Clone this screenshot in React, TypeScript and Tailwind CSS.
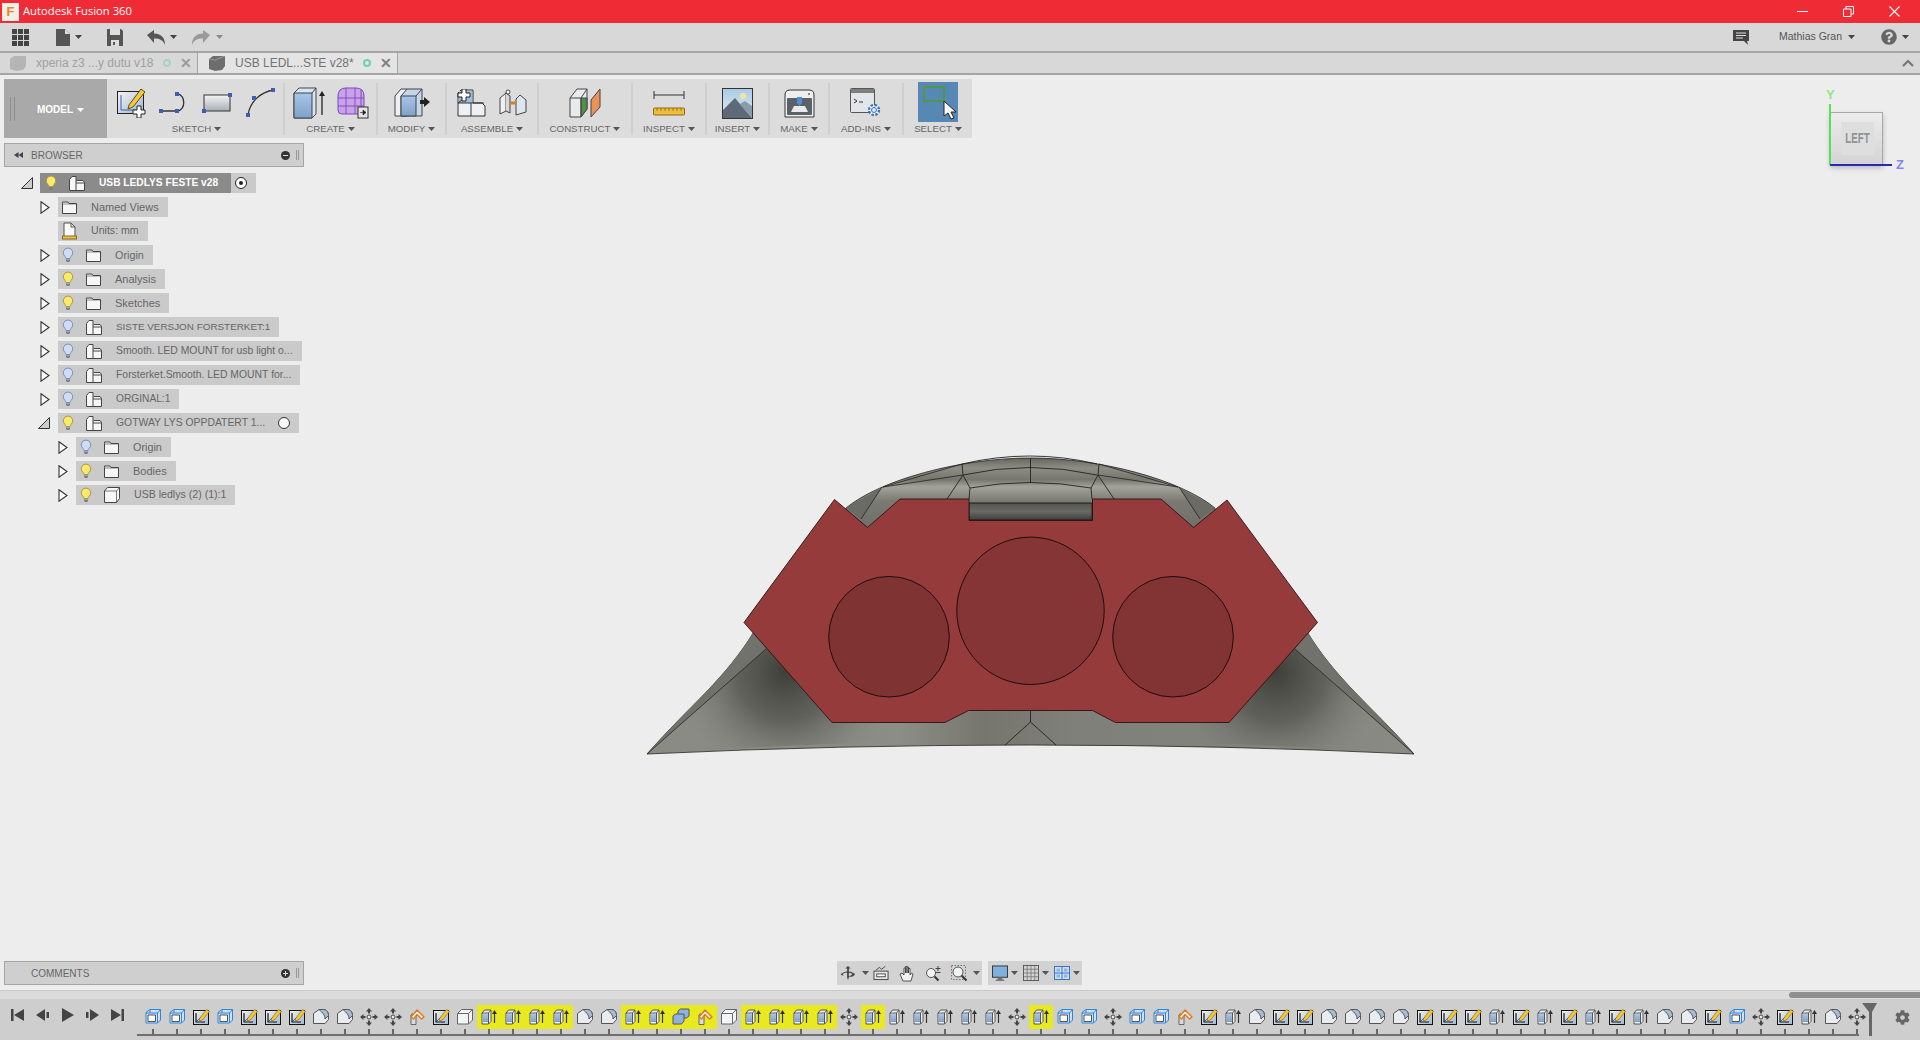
import { FaCog, FaQuestionCircle } from "react-icons/fa";

const timeline = "c c s c s s s f f m m o s b E E E E f f E E D O b E E E E m E e e e e e m E c c m c c o s e f s s f f f f s s s e s e s e s e f f s c m s e f m".split(" ");

function Caret({ color = "#444" }: { color?: string }) {
  return (
    <svg width="7" height="4" viewBox="0 0 7 4" className="shrink-0">
      <path d="M0 0h7L3.5 4z" fill={color} />
    </svg>
  );
}

function Gradients() {
  return (
    <svg className="absolute h-0 w-0">
      <defs>
        <linearGradient id="blueFace" x1="0" y1="0" x2="0" y2="1">
          <stop offset="0" stopColor="#a9c6e8" />
          <stop offset="1" stopColor="#7fa0c9" />
        </linearGradient>
        <linearGradient id="paper" x1="0" y1="0" x2="1" y2="1">
          <stop offset="0" stopColor="#ffffff" />
          <stop offset="1" stopColor="#b9c0c9" />
        </linearGradient>
        <linearGradient id="rectFill" x1="0" y1="0" x2="0" y2="1">
          <stop offset="0" stopColor="#f4f4f4" />
          <stop offset="1" stopColor="#a9aeb6" />
        </linearGradient>
        <linearGradient id="sketchFill" x1="0" y1="0" x2="1" y2="1">
          <stop offset="0" stopColor="#f5f5f5" />
          <stop offset="1" stopColor="#9fb4d2" />
        </linearGradient>
        <linearGradient id="photo" x1="0" y1="0" x2="0" y2="1">
          <stop offset="0" stopColor="#a9cbe3" />
          <stop offset="1" stopColor="#e6ecef" />
        </linearGradient>
      </defs>
    </svg>
  );
}

/* timeline glyphs, all on a 18px box */
function TimelineIcon({ kind }: { kind: string }) {
  const k = kind.toLowerCase();
  return (
    <svg width="18" height="18" viewBox="0 0 18 18">
      {k === "c" && (
        <g strokeLinejoin="round">
          <path d="M6 1.5h10.5v10.5l-3 3H2v-10.5z" fill="#cfe0f2" stroke="#2f86dc" />
          <path d="M6 1.5v3.5M2 5h11.5v10M13.5 5l3-3.5" fill="none" stroke="#2f86dc" />
          <rect x="4" y="7" width="7.5" height="6.5" fill="#fbfbfb" stroke="#555" />
        </g>
      )}
      {k === "s" && (
        <g>
          <rect x="1.5" y="2.5" width="15" height="14" fill="url(#sketchFill)" stroke="#111" />
          <path d="M4 5v9h9" fill="none" stroke="#111" strokeWidth="1.2" />
          <path d="M5 13l5-5" stroke="#2f5fa8" />
          <path d="M7.5 10.5L14.5 1.5l3 2-7 8.5-3 .8z" fill="#f2c531" stroke="#7a6522" strokeWidth=".6" />
        </g>
      )}
      {k === "e" && (
        <g strokeLinejoin="round">
          <path d="M2 5l2.5-3H11v11.5L8.5 16H2z" fill="#eef0f3" stroke="#555" />
          <path d="M3 6h5.5v8H3z" fill="url(#blueFace)" />
          <path d="M2 5h6.5v11M8.5 5L11 2" fill="none" stroke="#555" />
          <path d="M14.5 15V4" stroke="#333" strokeWidth="1.2" />
          <path d="M12 6l2.5-4L17 6z" fill="#333" />
        </g>
      )}
      {k === "f" && (
        <g strokeLinejoin="round">
          <path d="M1.5 15.5V5.5L7 1.5h4.5c3 0 5 3 5 6v4L13 15.5z" fill="#e9ecef" stroke="#555" />
          <path d="M7 1.5h4.5c3 0 5 3 5 6L13 11C13 7 11 5 7 1.5z" fill="#a9bcd6" stroke="#555" />
        </g>
      )}
      {k === "m" && (
        <g fill="#444">
          <path d="M9 0l3 3.5h-2v2H8v-2H6zM9 18l3-3.5h-2v-2H8v2H6zM0 9l3.5-3v2h2v2h-2v2zM18 9l-3.5-3v2h-2v2h2v2z" />
          <circle cx="9" cy="9" r="2" fill="#eee" stroke="#444" />
        </g>
      )}
      {k === "o" && (
        <g strokeLinejoin="round">
          <path d="M3 7h5v9.5H3z" fill="#d8dce2" stroke="#666" />
          <ellipse cx="5.5" cy="7" rx="2.5" ry="1.2" fill="#fff" stroke="#666" />
          <path d="M3 9l6-7 7 7-2.5 2L9 6.5 5.5 11z" fill="#f6efe2" stroke="#dd7a1f" strokeWidth="1.4" />
        </g>
      )}
      {k === "b" && (
        <g strokeLinejoin="round">
          <path d="M1.5 5.5L5.5 1.5h11v10.5l-4 4h-11z" fill="#f4f5f6" stroke="#666" />
          <path d="M1.5 5.5h11v10.5M12.5 5.5l4-4" fill="none" stroke="#666" />
        </g>
      )}
      {k === "d" && (
        <g strokeLinejoin="round" fill="#8fb2e0" stroke="#555">
          <path d="M6 3l2.5-2H17v7l-2.5 2H6z" />
          <path d="M1 8l2.5-2H12v7l-2.5 3H1z" />
        </g>
      )}
    </svg>
  );
}

function Bulb({ on }: { on: boolean }) {
  return (
    <svg width="12" height="16" viewBox="0 0 12 16" className="shrink-0">
      <path
        d="M6 1a4.8 4.8 0 0 0-3 8.5c.7.7.8 1.3.9 2h4.2c.1-.7.2-1.3.9-2A4.8 4.8 0 0 0 6 1z"
        fill={on ? "#fbe96a" : "#cfdcf5"}
        stroke={on ? "#a59a4e" : "#7e8fb3"}
      />
      <path d="M4 12.5h4v1.5l-1 1H5l-1-1z" fill="#77808a" />
    </svg>
  );
}

function FolderIcon() {
  return (
    <svg width="15" height="13" viewBox="0 0 15 13" className="shrink-0">
      <path d="M.5 2.5V1h5.5l1 1.5h7.5v10H.5z" fill="#f6f6f6" stroke="#444" />
      <path d="M.5 3h14" stroke="#444" strokeWidth=".6" />
    </svg>
  );
}

function UnitsIcon() {
  return (
    <svg width="15" height="18" viewBox="0 0 15 18" className="shrink-0">
      <path d="M2 14V1h7l4 4v9" fill="#fafafa" stroke="#555" />
      <path d="M9 1v4h4" fill="none" stroke="#555" />
      <rect x=".5" y="14" width="14" height="3" fill="#efc14a" stroke="#8a6a1e" />
    </svg>
  );
}

function ComponentIcon() {
  return (
    <svg width="16" height="16" viewBox="0 0 16 16" className="shrink-0">
      <path d="M.5 15.5v-11L3 1.500h4v5l1-1h6l1.500 2v8z" fill="#f7f7f7" stroke="#444" strokeLinejoin="round" />
      <path d="M7 6.500v9M7 8h8" fill="none" stroke="#444" />
    </svg>
  );
}

function BodyIcon() {
  return (
    <svg width="16" height="16" viewBox="0 0 16 16" className="shrink-0">
      <path d="M.5 4l3-3.500h12v11l-3 4h-12z" fill="#f7f7f7" stroke="#444" strokeLinejoin="round" />
      <path d="M.5 4h12v11.500M12.500 4l3-3.500" fill="none" stroke="#444" strokeWidth=".7" />
    </svg>
  );
}

function ExpandArrow({ open }: { open?: boolean }) {
  return open ? (
    <svg width="12" height="12" viewBox="0 0 12 12" className="shrink-0">
      <path d="M.5 11.500L11.500.5v11z" fill="#cdcdcd" stroke="#333" />
    </svg>
  ) : (
    <svg width="10" height="13" viewBox="0 0 10 13" className="shrink-0">
      <path d="M1 .8L9 6.500 1 12.200z" fill="#fafafa" stroke="#333" strokeWidth="1.100" />
    </svg>
  );
}

type RowProps = {
  indent: string;
  open?: boolean;
  noArrow?: boolean;
  bulb?: "on" | "off";
  icon: "folder" | "units" | "comp" | "body";
  label: string;
  size: string;
  ring?: boolean;
};

function TreeRow({ indent, open, noArrow, bulb, icon, label, size, ring }: RowProps) {
  return (
    <div className={`flex h-5 items-center ${indent}`}>
      <div className={`flex w-[18px] items-center ${open ? "-ml-[2px] pr-[2px] w-[20px]" : ""}`}>{!noArrow && <ExpandArrow open={open} />}</div>
      <div className="flex h-5 items-center bg-[#cacaca] pl-1 pr-[9px]">
        {bulb && (
          <div className="mr-3">
            <Bulb on={bulb === "on"} />
          </div>
        )}
        {icon === "folder" && <FolderIcon />}
        {icon === "units" && <UnitsIcon />}
        {icon === "comp" && <ComponentIcon />}
        {icon === "body" && <BodyIcon />}
        <span className={`ml-[14px] whitespace-nowrap text-[#666] ${size}`}>{label}</span>
        {ring && <div className="ml-[13px] h-3 w-3 rounded-full border border-[#333] bg-[#f7f7f7]" />}
      </div>
    </div>
  );
}

function Section({ width, label, children }: { width: string; label: string; children: React.ReactNode }) {
  return (
    <div className={`flex shrink-0 flex-col items-center pt-[5px] ${width}`}>
      <div className="flex h-[38px] items-center gap-3">{children}</div>
      <div className="flex h-[14px] items-center gap-[3px] text-[9.700px] text-[#666]">
        {label}
        <Caret color="#555" />
      </div>
    </div>
  );
}

const Sep = () => <div className="h-[52px] w-[2px] shrink-0 self-center bg-[#cfcfcf]" />;

function Node({ x, y }: { x: number; y: number }) {
  return <rect x={x - 2} y={y - 2} width="4" height="4" fill="#3c5fb0" />;
}

function Toolbar() {
  return (
    <div className="ml-1 mt-1 flex h-[59px] w-[968px] bg-[#dcdcdc]">
      <div className="flex h-full w-[103px] shrink-0 items-center bg-[#a9a9a9] pl-[6px]">
        <div className="h-6 w-[5px] border-x border-[#8e8e8e]" />
        <div className="ml-[22px] mt-[2px] flex items-center gap-1 text-[10px] font-bold text-white">
          MODEL
          <Caret color="#fff" />
        </div>
      </div>
      <Section width="w-[176px] pl-[3px]" label="SKETCH">
        <svg width="29" height="30" viewBox="0 0 29 30">
          <rect x=".5" y="3.500" width="26" height="22" fill="url(#sketchFill)" stroke="#222" />
          <path d="M4 7v15h15" fill="none" stroke="#3c5fb0" />
          <path d="M12 17L24 1l4 3-12 15-5 2z" fill="#f3c83c" stroke="#5a4a18" />
          <path d="M20 18h4v4h4v4h-4v4h-4v-4h-4v-4h4z" fill="#fff" stroke="#222" />
        </svg>
        <svg width="32" height="26" viewBox="0 0 32 26">
          <path d="M3 21h16c9 0 9-17 0-17" fill="none" stroke="#333" strokeWidth="1.300" />
          <Node x={3} y={21} />
          <Node x={19} y={21} />
          <Node x={19} y={4} />
        </svg>
        <svg width="30" height="22" viewBox="0 0 30 22">
          <rect x="2" y="3" width="26" height="16" fill="url(#rectFill)" stroke="#333" />
          <Node x={2} y={19} />
          <Node x={28} y={3} />
        </svg>
        <svg width="32" height="30" viewBox="0 0 32 30">
          <path d="M4 27C6 14 16 4 30 2" fill="none" stroke="#333" strokeWidth="1.300" />
          <Node x={4} y={27} />
          <Node x={10} y={10} />
          <Node x={29} y={2} />
        </svg>
      </Section>
      <Sep />
      <Section width="w-[91px]" label="CREATE">
        <svg width="32" height="32" viewBox="0 0 32 32">
          <path d="M1 6L6 1h17v26l-4 4H1z" fill="#d8e4f2" stroke="#444" strokeLinejoin="round" />
          <path d="M1 6h18v25H1z" fill="url(#blueFace)" stroke="#444" />
          <path d="M19 6l4-5" stroke="#444" />
          <path d="M29 28V6" stroke="#222" strokeWidth="1.300" />
          <path d="M26 9l3-5 3 5z" fill="#222" />
        </svg>
        <svg width="32" height="32" viewBox="0 0 32 32">
          <path d="M1 9Q1 1 9 1h10q8 0 8 8v14q0 4-4 4H5q-4 0-4-4z" fill="#c9a2ec" stroke="#7d48b8" />
          <path d="M1 11h26M1 19h26M9 1v26M18 1v26M24 3v24" fill="none" stroke="#7d48b8" strokeWidth=".9" />
          <rect x="21" y="20" width="10" height="11" fill="#e5e5e5" stroke="#333" />
          <path d="M23 25.500h4M26 23l3 2.500-3 2.500z" fill="#222" stroke="#222" strokeWidth=".6" />
        </svg>
      </Section>
      <Sep />
      <Section width="w-[67px]" label="MODIFY">
        <svg width="36" height="30" viewBox="0 0 36 30">
          <path d="M1 28V8l6-7h6v27z" fill="#eef0f3" stroke="#444" strokeLinejoin="round" />
          <path d="M7 28V8l6-7h15v27z" fill="#c4d6ea" stroke="#444" strokeLinejoin="round" />
          <path d="M7 8h15v20H7z" fill="url(#blueFace)" stroke="#444" />
          <path d="M22 8l6-7" stroke="#444" />
          <path d="M26 12h4V9l6 5-6 5v-3h-4z" fill="#222" />
        </svg>
      </Section>
      <Sep />
      <Section width="w-[90px]" label="ASSEMBLE">
        <svg width="30" height="28" viewBox="0 0 30 28">
          <path d="M1 14V4l3-3h12v13h9l3 3v10H1z" fill="#eef0f3" stroke="#333" strokeLinejoin="round" />
          <path d="M2 2h13v12H2z" fill="#9cbce0" />
          <path d="M1 14h26M14 14v13M1 14l4-3" fill="none" stroke="#333" />
          <path d="M5 0h4v4h4v4H9v4H5V8H1V4h4z" fill="#fff" stroke="#222" />
        </svg>
        <svg width="29" height="28" viewBox="0 0 29 28">
          <path d="M1 25V9l6-5v18z" fill="#f0f0f0" stroke="#444" />
          <path d="M7 4l4 3v17l-4-2" fill="#d4d8dd" stroke="#444" />
          <path d="M17 26l10-3V11l-6-5-4 4z" fill="#dfe5ec" stroke="#444" />
          <path d="M11 14h6" stroke="#d77b2c" strokeWidth="3" />
          <circle cx="9" cy="3" r="2" fill="#fff" stroke="#444" />
        </svg>
      </Section>
      <Sep />
      <Section width="w-[92px]" label="CONSTRUCT">
        <svg width="32" height="30" viewBox="0 0 32 30">
          <path d="M1 10L8 1h10v20l-6 8H1z" fill="#e8eaec" stroke="#444" strokeLinejoin="round" />
          <path d="M12 10h6v11l-6 8z" fill="#4f9145" stroke="#444" />
          <path d="M1 10h11v19M12 10l6-9" fill="none" stroke="#444" />
          <path d="M22 12l9-11v18l-9 10z" fill="#e7935a" stroke="#444" />
        </svg>
      </Section>
      <Sep />
      <Section width="w-[72px]" label="INSPECT">
        <svg width="32" height="26" viewBox="0 0 32 26">
          <path d="M1 5h30M1 1v8M31 1v8" fill="none" stroke="#333" />
          <rect x=".5" y="18" width="31" height="7" rx="1" fill="#efbd3a" stroke="#8a6a1e" />
          <path d="M4 18v3M8 18v3M12 18v3M16 18v3M20 18v3M24 18v3M28 18v3" stroke="#8a6a1e" strokeWidth=".8" />
        </svg>
      </Section>
      <Sep />
      <Section width="w-[61px]" label="INSERT">
        <svg width="31" height="31" viewBox="0 0 31 31">
          <rect x=".5" y=".5" width="30" height="30" fill="url(#photo)" stroke="#333" />
          <circle cx="21" cy="8" r="3" fill="#f4e59a" />
          <path d="M1 30V22L13 10l17 20z" fill="#5e6a78" />
          <path d="M18 16l5-3 7 5v12z" fill="#8a9bab" />
        </svg>
      </Section>
      <Sep />
      <Section width="w-[58px]" label="MAKE">
        <svg width="31" height="29" viewBox="0 0 31 29">
          <path d="M1 6q0-5 5-5h19q5 0 5 5v22H1z" fill="#eeeeee" stroke="#333" />
          <rect x="3" y="9" width="25" height="17" rx="1" fill="#5b6168" />
          <path d="M13 8h5v6l-2.500 3-2.500-3z" fill="#4d8fd6" />
          <path d="M7 23l3-6h11l3 6z" fill="#e9e9e9" />
          <circle cx="25" cy="5" r="1" fill="#2f8a3a" />
        </svg>
      </Section>
      <Sep />
      <Section width="w-[72px]" label="ADD-INS">
        <div className="relative h-[30px] w-[32px]">
          <svg width="32" height="30" viewBox="0 0 32 30">
            <rect x=".5" y=".5" width="24" height="24" rx="1" fill="#e2e6ea" stroke="#555" />
            <rect x="1" y="1" width="23" height="4" fill="#7f7f7f" />
            <path d="M4 11l3 2-3 2M9 14h4" fill="none" stroke="#333" />
            <circle cx="24" cy="22" r="5" fill="#fff" stroke="#3a72c0" strokeWidth="2.400" strokeDasharray="2.500 1.400" />
            <circle cx="24" cy="22" r="2.500" fill="#dbe7f5" stroke="#3a72c0" />
          </svg>
        </div>
      </Section>
      <Sep />
      <Section width="w-[68px]" label="SELECT">
        <div className="relative -mt-[2px] h-[40px] w-[40px] bg-[#5787b5]">
          <div className="ml-[5px] mt-1 h-[16px] w-[22px] border-2 border-[#4b9a48]" />
          <svg width="14" height="20" viewBox="0 0 14 20" className="absolute left-[25px] top-[18px]">
            <path d="M1 1v15l4-3 3 6 3-1-3-6h5z" fill="#fff" stroke="#222" />
          </svg>
        </div>
      </Section>
    </div>
  );
}

function ModelView() {
  const wing = (
    <g>
      <path d="M647 754C690 705 725 680 755 630L800 640L960 741C860 742 740 747 647 754z" fill="url(#wingShade)" />
      <path d="M647 754C690 705 725 680 755 630L766 649z" fill="#72726c" />
      <path d="M647 754L766 649" stroke="#23231f" strokeWidth=".8" fill="none" />
      <path d="M846 508L882 487L861 519z" fill="#6b6b65" />
      <path d="M882 487L861 519M883 487L963 475M883 487L962 464" stroke="#23231f" strokeWidth=".8" fill="none" />
      <path d="M963 475L970 488L969 499M963 475L947 499M962 464L963 475" stroke="#23231f" strokeWidth=".9" fill="none" />
    </g>
  );
  return (
    <svg width="780" height="310" viewBox="640 450 780 310" className="absolute left-[640px] top-[375px]">
      <defs>
        <linearGradient id="bodyBase" x1="0" y1="0" x2="1" y2="0">
          <stop offset="0" stopColor="#8b8b85" />
          <stop offset=".22" stopColor="#8a8a84" />
          <stop offset=".33" stopColor="#8d8d87" />
          <stop offset=".44" stopColor="#76766f" />
          <stop offset=".56" stopColor="#80807a" />
          <stop offset=".78" stopColor="#83837d" />
          <stop offset="1" stopColor="#8b8b85" />
        </linearGradient>
        <radialGradient id="wingShade" gradientUnits="userSpaceOnUse" cx="785" cy="672" r="110">
          <stop offset="0" stopColor="#3f3f3a" />
          <stop offset=".45" stopColor="#5b5b55" stopOpacity=".85" />
          <stop offset="1" stopColor="#85857f" stopOpacity="0" />
        </radialGradient>
        <linearGradient id="dome" x1="0" y1="0" x2="0" y2="1">
          <stop offset="0" stopColor="#66665f" />
          <stop offset=".14" stopColor="#8d8d86" />
          <stop offset=".3" stopColor="#76766f" />
          <stop offset=".4" stopColor="#a3a39c" />
          <stop offset=".6" stopColor="#7a7a73" />
          <stop offset="1" stopColor="#6f6f69" />
        </linearGradient>
        <linearGradient id="slot" x1="0" y1="0" x2="0" y2="1">
          <stop offset="0" stopColor="#53534f" />
          <stop offset=".5" stopColor="#6a6a65" />
          <stop offset="1" stopColor="#3e3e3a" />
        </linearGradient>
      </defs>
      <path d="M846 508C880 480 960 458 1030.500 458C1101 458 1181 480 1215 508L1215 530L846 530z" fill="url(#dome)" stroke="#23231f" strokeWidth=".8" />
      <path d="M647 754C690 705 725 680 755 630L1306 630C1336 680 1371 705 1414 754Q1030 736 647 754z" fill="url(#bodyBase)" stroke="#23231f" strokeWidth=".8" />
      {wing}
      <g transform="matrix(-1 0 0 1 2061 0)">{wing}</g>
      <path d="M1030.500 458V483M962 464Q1030 448 1097 464M963 475Q1030 460 1097 475M970 488Q1030 477 1091 488" fill="none" stroke="#23231f" strokeWidth=".9" />
      <rect x="969" y="503" width="123" height="17" fill="url(#slot)" stroke="#1b1b18" />
      <path
        d="M834.500 499.500L867.500 527.500L900 499H969V520.500H1092.500V499H1161L1193.500 527.500L1227 500L1317.500 622.500L1229 722.500H1115.500L1092.500 710.500H968.500L945 722.500H832L744 622.500z"
        fill="#963b3b"
        stroke="#2b1212"
        strokeWidth=".9"
        strokeLinejoin="round"
      />
      <circle cx="889" cy="636.700" r="60.300" fill="#803333" stroke="#1f0c0c" />
      <circle cx="1030.500" cy="610.800" r="73.700" fill="#853535" stroke="#1f0c0c" />
      <circle cx="1173" cy="636.700" r="60.300" fill="#823333" stroke="#1f0c0c" />
      <path d="M1030.500 710.500V722M1030.500 722L1005 745M1030.500 722L1056 745" fill="none" stroke="#23231f" strokeWidth=".9" />
    </svg>
  );
}

function ViewCube() {
  return (
    <div className="absolute left-[1820px] top-[15px] h-[90px] w-[90px]">
      <div className="absolute left-[10px] top-[22px] h-[53px] w-[53px] border border-[#a8a8a8] bg-gradient-to-b from-[#ececec] to-[#d4d4d4] shadow-[0_3px_5px_rgba(90,90,110,0.35)]">
        <div className="ml-[10px] mt-[9px] flex h-[33px] w-[33px] items-center justify-center bg-[#dedede] text-[14px] font-bold text-[#8f9297]">
          <span className="scale-x-[0.7]">LEFT</span>
        </div>
      </div>
      <div className="absolute left-[9px] top-[14px] h-[61px] w-[1.500px] bg-[#58df58]" />
      <div className="absolute left-[10px] top-[74px] h-[2px] w-[62px] bg-[#2a2ab0]" />
      <span className="absolute left-[6px] -top-[2px] text-[13px] font-bold leading-none text-[#8ee88e]">Y</span>
      <span className="absolute left-[76px] top-[68px] text-[13px] font-bold leading-none text-[#8585ee]">Z</span>
    </div>
  );
}

function ViewControls() {
  return (
    <div className="absolute bottom-[5px] left-[837px] flex gap-[6px]">
      <div className="flex h-6 w-[145px] items-center bg-[#d2d2d2] pl-[3px]">
        <svg width="16" height="18" viewBox="0 0 18 18">
          <path d="M9 1l3 3H10v10l-1 3-1-3V4H6zM1 10q8-6 16 0-2 4-8 3 4-1 5-3-6-3-11 0l1 2-3-1z" fill="#444" />
        </svg>
        <div className="ml-[6px]">
          <Caret color="#555" />
        </div>
        <svg width="16" height="16" viewBox="0 0 17 16" className="ml-1">
          <rect x="1" y="6" width="15" height="9" fill="#e6e6e6" stroke="#444" />
          <rect x="4" y="9" width="9" height="3" fill="#fff" stroke="#444" />
          <path d="M3 5l4-3 2 2 4-3" fill="none" stroke="#444" />
        </svg>
        <svg width="16" height="17" viewBox="0 0 16 17" className="ml-[10px]">
          <path d="M4 16L1 9l2-1 2 2V3h1.500v5V1.500H8V8V2h1.500v6V3.500H11V10l1.500-2 1.500 1-2 7z" fill="#f2f2f2" stroke="#444" strokeWidth=".9" />
        </svg>
        <svg width="17" height="17" viewBox="0 0 17 17" className="ml-[10px]">
          <circle cx="6" cy="8" r="4.500" fill="#f3f3f3" stroke="#555" />
          <path d="M9.500 11.500l4 4" stroke="#333" strokeWidth="2" />
          <path d="M13 1v5M10.500 3.500h5M10.500 7.500h5" stroke="#444" />
        </svg>
        <svg width="17" height="17" viewBox="0 0 17 17" className="ml-[9px]">
          <rect x=".5" y=".5" width="14" height="14" fill="none" stroke="#777" strokeDasharray="1.500 1.500" />
          <circle cx="7" cy="7" r="5" fill="#eef3f6" stroke="#555" />
          <path d="M10.500 10.500l5 5" stroke="#333" strokeWidth="2" />
        </svg>
        <div className="ml-[5px]">
          <Caret color="#555" />
        </div>
      </div>
      <div className="flex h-6 w-[94px] items-center bg-[#d2d2d2] pl-1">
        <svg width="16" height="17" viewBox="0 0 17 17">
          <rect x=".5" y=".5" width="16" height="12" fill="#7fb0de" stroke="#333" />
          <path d="M6 13h5v2h2v1.500H4V15h2z" fill="#777" />
        </svg>
        <div className="ml-[3px]">
          <Caret color="#555" />
        </div>
        <svg width="16" height="16" viewBox="0 0 17 17" className="ml-[5px]">
          <rect x=".5" y=".5" width="16" height="16" fill="#d4d4d4" stroke="#555" />
          <path d="M4.500 1v15M8.500 1v15M12.500 1v15M1 4.500h15M1 8.500h15M1 12.500h15" stroke="#777" strokeWidth=".9" />
        </svg>
        <div className="ml-[3px]">
          <Caret color="#555" />
        </div>
        <svg width="16" height="14" viewBox="0 0 16 14" className="ml-[5px]">
          <rect x=".5" y=".5" width="15" height="13" fill="#cfe1f5" stroke="#3a72c0" />
          <path d="M8 1v12M1 7h14" stroke="#3a72c0" />
          <path d="M2.500 2.500h3.500v3H2.500zM10 2.500h3.500v3H10zM2.500 8.500h3.500v3H2.500zM10 8.500h3.500v3H10z" fill="#8db5e2" />
        </svg>
        <div className="ml-[3px]">
          <Caret color="#555" />
        </div>
      </div>
    </div>
  );
}

export default function App() {
  return (
    <div className="relative flex h-[1040px] w-[1920px] flex-col overflow-hidden bg-[#ededed] font-['Liberation_Sans',sans-serif]">
      <Gradients />
      {/* title bar */}
      <div className="flex h-[23px] shrink-0 items-center bg-[#ef2b36] pl-[2px] text-white">
        <div className="flex h-[18px] w-[17px] items-center justify-center bg-[#f3efe6] text-[13px] font-bold leading-none text-[#e8862a]">F</div>
        <span className="ml-1 font-['Open_Sans',sans-serif] text-[11.250px]">Autodesk Fusion 360</span>
        <div className="ml-auto flex items-center">
          <svg width="11" height="2" viewBox="0 0 11 2" className="mr-[35px]">
            <rect width="11" height="1" fill="#fff" />
          </svg>
          <svg width="11" height="11" viewBox="0 0 11 11" className="mr-[35px]">
            <path d="M.5 3h7.500v7.500H.5zM3 3V.5h7.500V8H8" fill="none" stroke="#fff" />
          </svg>
          <svg width="11" height="11" viewBox="0 0 11 11" className="mr-[20px]">
            <path d="M.5.5l10 10M10.500.5l-10 10" stroke="#fff" strokeWidth="1.100" />
          </svg>
        </div>
      </div>
      {/* quick access */}
      <div className="flex h-[28px] shrink-0 items-center bg-[#d8d8d8] pl-3">
        <svg width="17" height="17" viewBox="0 0 17 17">
          <path d="M0 0h5v5H0zM6 0h5v5H6zM12 0h5v5h-5zM0 6h5v5H0zM6 6h5v5H6zM12 6h5v5h-5zM0 12h5v5H0zM6 12h5v5H6zM12 12h5v5h-5z" fill="#444" />
        </svg>
        <svg width="14" height="17" viewBox="0 0 14 17" className="ml-[27px]">
          <path d="M0 0h9l5 5v12H0z" fill="#555" />
          <path d="M9 0v5h5" fill="#ddd" />
        </svg>
        <div className="ml-[5px]">
          <Caret />
        </div>
        <svg width="16" height="17" viewBox="0 0 16 17" className="ml-[25px]">
          <path d="M0 0h14l2 2v15H0z" fill="#555" />
          <rect x="3" y="0" width="10" height="6" fill="#ddd" />
          <rect x="4" y="11" width="8" height="6" fill="#ddd" />
          <rect x="6" y="13" width="2" height="3" fill="#555" />
        </svg>
        <svg width="18" height="15" viewBox="0 0 18 15" className="ml-6">
          <path d="M0 5l7-5v3.500c7 0 11 4 11 11.500-2-5-5-6.500-11-6.500V13z" fill="#555" />
        </svg>
        <div className="ml-[5px]">
          <Caret />
        </div>
        <svg width="18" height="15" viewBox="0 0 18 15" className="ml-[15px]">
          <path d="M18 5l-7-5v3.500C4 3.500 0 7.500 0 15c2-5 5-6.500 11-6.500V13z" fill="#9a9a9a" />
        </svg>
        <div className="ml-[6px]">
          <Caret color="#8a8a8a" />
        </div>
        <svg width="17" height="15" viewBox="0 0 17 15" className="ml-auto">
          <path d="M0 0h16v11h-2l1 4-4-4H0z" fill="#444" />
          <path d="M3 3h10M3 5.500h10M3 8h7" stroke="#ddd" />
        </svg>
        <span className="ml-[29px] text-[10.500px] text-[#555]">Mathias Gran</span>
        <div className="ml-[6px]">
          <Caret />
        </div>
        <div className="ml-[26px] flex items-center gap-[5px] pr-[11px] text-[#666]">
          <FaQuestionCircle size={16} />
          <Caret />
        </div>
      </div>
      {/* tabs */}
      <div className="flex h-[24px] shrink-0 border-y-2 border-t-[#a5a5a5] border-b-[#a5a5a5] bg-[#d8d8d8]">
        <div className="flex w-[198px] items-center border-r border-[#a5a5a5] pl-[10px] text-[12px] text-[#a0a0a0]">
          <svg width="16" height="15" viewBox="0 0 16 15">
            <path d="M0 3l4-3h12v10l-3 4-7 1-6-2z" fill="#b5b5b5" />
          </svg>
          <span className="ml-[10px] whitespace-nowrap">xperia z3 ...y dutu v18</span>
          <div className="ml-[10px] h-2 w-2 rounded-full border-2 border-[#a5d4c0]" />
          <span className="ml-[9px] text-[14px] font-bold leading-none text-[#9a9a9a]">✕</span>
        </div>
        <div className="flex w-[200px] items-center border-r border-[#a5a5a5] bg-[#e4e4e4] pl-[11px] text-[12px] font-bold text-[#737373]">
          <svg width="16" height="15" viewBox="0 0 16 15">
            <path d="M0 3l4-3h12v10l-3 4-7 1-6-2z" fill="#6d6d6d" />
            <path d="M0 3l6 1 10-4" fill="none" stroke="#bbb" strokeWidth=".6" />
          </svg>
          <span className="ml-[10px] whitespace-nowrap font-normal">USB LEDL...STE v28*</span>
          <div className="ml-[9px] h-2 w-2 rounded-full border-2 border-[#6fd0b0]" />
          <span className="ml-[9px] text-[14px] leading-none text-[#808080]">✕</span>
        </div>
        <div className="ml-auto flex items-center pr-[6px]">
          <svg width="12" height="8" viewBox="0 0 12 8">
            <path d="M1 7l5-5 5 5" fill="none" stroke="#777" strokeWidth="2.200" />
          </svg>
        </div>
      </div>
      {/* canvas */}
      <div className="relative flex min-h-0 flex-1 flex-col">
        <ModelView />
        <ViewCube />
        <div className="relative">
          <Toolbar />
        </div>
        <div className="relative ml-1 mt-[5px] flex h-6 w-[300px] items-center border border-[#a5a5a5] bg-[#cfcfcf] pl-[9px] pr-1 text-[10px] text-[#666]">
          <svg width="9" height="6" viewBox="0 0 9 6">
            <path d="M4.500 0v6L0 3zM9 0v6L4.500 3z" fill="#444" />
          </svg>
          <span className="ml-2">BROWSER</span>
          <svg width="9" height="9" viewBox="0 0 9 9" className="ml-auto mr-[6px]">
            <circle cx="4.500" cy="4.500" r="4.500" fill="#333" />
            <rect x="2" y="4" width="5" height="1" fill="#ddd" />
          </svg>
          <div className="h-[10px] w-[3px] border-x border-[#999]" />
        </div>
        <div className="relative mt-[6px] flex flex-col gap-1">
          <div className="flex h-5 items-center pl-[21px]">
            <div className="flex w-[19px] items-center">
              <ExpandArrow open />
            </div>
            <div className="flex h-5 w-[191px] items-center bg-[#8b8b8b] pl-[5px]">
              <Bulb on />
              <div className="ml-3">
                <ComponentIcon />
              </div>
              <span className="ml-[14px] whitespace-nowrap text-[10.200px] font-bold text-white">USB LEDLYS FESTE v28</span>
            </div>
            <div className="flex h-5 w-[25px] items-center bg-[#cacaca] pl-1">
              <div className="flex h-3 w-3 items-center justify-center rounded-full border border-[#222] bg-white">
                <div className="h-1 w-1 rounded-full bg-[#222]" />
              </div>
            </div>
          </div>
          <TreeRow indent="pl-[40px]" icon="folder" label="Named Views" size="text-[11px]" />
          <TreeRow indent="pl-[40px]" noArrow icon="units" label="Units: mm" size="text-[10.600px]" />
          <TreeRow indent="pl-[40px]" bulb="off" icon="folder" label="Origin" size="text-[10.800px]" />
          <TreeRow indent="pl-[40px]" bulb="on" icon="folder" label="Analysis" size="text-[11px]" />
          <TreeRow indent="pl-[40px]" bulb="on" icon="folder" label="Sketches" size="text-[11px]" />
          <TreeRow indent="pl-[40px]" bulb="off" icon="comp" label="SISTE VERSJON FORSTERKET:1" size="text-[9.900px]" />
          <TreeRow indent="pl-[40px]" bulb="off" icon="comp" label="Smooth. LED MOUNT for usb light o..." size="text-[10.400px]" />
          <TreeRow indent="pl-[40px]" bulb="off" icon="comp" label="Forsterket.Smooth. LED MOUNT for..." size="text-[10.400px]" />
          <TreeRow indent="pl-[40px]" bulb="off" icon="comp" label="ORGINAL:1" size="text-[10.200px]" />
          <TreeRow indent="pl-[40px]" open bulb="on" icon="comp" label="GOTWAY LYS OPPDATERT 1..." size="text-[10.400px]" ring />
          <TreeRow indent="pl-[58px]" bulb="off" icon="folder" label="Origin" size="text-[10.800px]" />
          <TreeRow indent="pl-[58px]" bulb="on" icon="folder" label="Bodies" size="text-[11px]" />
          <TreeRow indent="pl-[58px]" bulb="on" icon="body" label="USB ledlys (2) (1):1" size="text-[10.600px]" />
        </div>
        <div className="relative mb-[5px] ml-1 mt-auto flex h-6 w-[300px] items-center border border-[#a5a5a5] bg-[#cfcfcf] pl-[26px] pr-1 text-[10px] text-[#666]">
          <span>COMMENTS</span>
          <svg width="9" height="9" viewBox="0 0 9 9" className="ml-auto mr-[6px]">
            <circle cx="4.500" cy="4.500" r="4.500" fill="#333" />
            <path d="M2 4h2V2h1v2h2v1H5v2H4V5H2z" fill="#ddd" />
          </svg>
          <div className="h-[10px] w-[3px] border-x border-[#999]" />
        </div>
        <ViewControls />
      </div>
      {/* timeline scrollbar */}
      <div className="flex h-[9px] shrink-0 items-center justify-end border-t border-[#c9c9c9] bg-[#dcdcdc]">
        <div className="h-[6px] w-[131px] rounded-l-sm bg-[#8f8f8f]" />
      </div>
      {/* timeline */}
      <div className="relative flex h-[41px] shrink-0 bg-[#cecece] pl-[11px]">
        <div className="flex h-[32px] items-center gap-3">
          <svg width="13" height="14" viewBox="0 0 13 14">
            <path d="M0 1h2.500v12H0zM13 1v12L3 7z" fill="#444" />
          </svg>
          <svg width="13" height="14" viewBox="0 0 13 14">
            <path d="M9 1v12L0 7zM10.500 4H13v6h-2.500z" fill="#444" />
          </svg>
          <svg width="13" height="14" viewBox="0 0 13 14">
            <path d="M1 0v14l12-7z" fill="#444" />
          </svg>
          <svg width="13" height="14" viewBox="0 0 13 14">
            <path d="M4 1v12l9-6zM0 4h2.500v6H0z" fill="#444" />
          </svg>
          <svg width="13" height="14" viewBox="0 0 13 14">
            <path d="M13 1h-2.500v12H13zM0 1v12l10-6z" fill="#444" />
          </svg>
        </div>
        <div className="ml-[17px] flex flex-col pt-[6px]">
          <div className="flex">
            {timeline.map((kind, i) => (
              <div key={i} className="flex w-6 flex-col items-center">
                <div className={`flex h-6 w-6 items-center justify-center ${kind !== kind.toLowerCase() ? "bg-[#e9e91f]" : ""}`}>
                  <TimelineIcon kind={kind} />
                </div>
                <div className="h-[5px] w-[2px] bg-[#666]" />
              </div>
            ))}
          </div>
          <div className="-ml-1 h-[2px] w-[1722px] bg-[#6f6f6f]" />
        </div>
        <svg width="16" height="33" viewBox="0 0 16 33" className="absolute left-[1862px] top-[4px]">
          <path d="M0 0h15l-5 9v24H7V9z" fill="#666" />
        </svg>
        <div className="absolute left-[1895px] top-[11px] text-[#666]">
          <FaCog size={15} />
        </div>
      </div>
    </div>
  );
}
